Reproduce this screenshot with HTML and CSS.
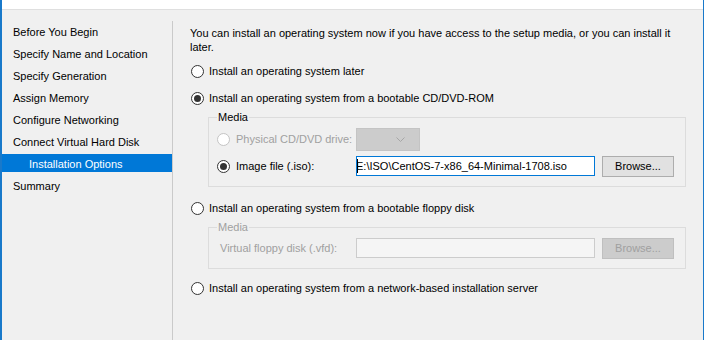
FILE: index.html
```html
<!DOCTYPE html>
<html lang="en">
<head>
    <meta charset="UTF-8">
    <title>Installation Options</title>
    <link rel="stylesheet" href="styles.css">
</head>
<body>

    <div class="wizard">
        <!-- Header strip -->
        <div class="wizard-header"></div>

        <div class="wizard-body">
            <!-- Step list -->
            <ul class="steps">
                <li class="step">Before You Begin</li>
                <li class="step">Specify Name and Location</li>
                <li class="step">Specify Generation</li>
                <li class="step">Assign Memory</li>
                <li class="step">Configure Networking</li>
                <li class="step">Connect Virtual Hard Disk</li>
                <li class="step step-sub step-active">Installation Options</li>
                <li class="step">Summary</li>
            </ul>

            <div class="divider"></div>

            <!-- Page content -->
            <div class="page">
                <p class="intro">You can install an operating system now if you have access to the setup media, or you can install it<br>later.</p>

                <label class="option option-first">
                    <span class="radio"></span>
                    <span>Install an operating system later</span>
                </label>

                <label class="option option-second">
                    <span class="radio radio-checked"></span>
                    <span>Install an operating system from a bootable CD/DVD-ROM</span>
                </label>

                <fieldset class="media">
                    <legend>Media</legend>
                    <div class="media-row">
                        <span class="media-label disabled">
                            <span class="radio radio-disabled"></span>
                            <span>Physical CD/DVD drive:</span>
                        </span>
                        <span class="combo">
                            <svg width="9" height="5" viewBox="0 0 9 5"><path d="M0.5 0.5 L4.5 4.5 L8.5 0.5" fill="none" stroke="#a6a6a6" stroke-width="1"/></svg>
                        </span>
                    </div>
                    <div class="media-row">
                        <span class="media-label">
                            <span class="radio radio-checked"></span>
                            <span>Image file (.iso):</span>
                        </span>
                        <span class="textbox textbox-focus"><span class="caret"></span><span class="textbox-value">E:\ISO\CentOS-7-x86_64-Minimal-1708.iso</span></span>
                        <span class="btn">Browse...</span>
                    </div>
                </fieldset>

                <label class="option option-floppy">
                    <span class="radio"></span>
                    <span>Install an operating system from a bootable floppy disk</span>
                </label>

                <fieldset class="media media-disabled">
                    <legend>Media</legend>
                    <div class="media-row">
                        <span class="media-label media-label-plain disabled">Virtual floppy disk (.vfd):</span>
                        <span class="textbox textbox-disabled"></span>
                        <span class="btn btn-disabled">Browse...</span>
                    </div>
                </fieldset>

                <label class="option option-network">
                    <span class="radio"></span>
                    <span>Install an operating system from a network-based installation server</span>
                </label>
            </div>
        </div>
    </div>

</body>
</html>
```

FILE: styles.css
```css
/* Reset */
*, *::before, *::after {
    box-sizing: border-box;
    margin: 0;
    padding: 0;
}

body {
    font-family: 'Liberation Sans', Arial, sans-serif;
    font-size: 11px;
    color: #000;
    background: #f0f0f0;
}

/* Window frame */
.wizard {
    width: 704px;
    height: 340px;
    background: #f0f0f0;
    border-left: 2px solid #1979ca;
    border-right: 1px solid #1979ca;
    display: flex;
    flex-direction: column;
    overflow: hidden;
}

.wizard-header {
    height: 10px;
    background: #fff;
    border-bottom: 1px solid #dfdfdf;
    flex: none;
}

.wizard-body {
    flex: 1;
    display: flex;
}

/* Step list */
.steps {
    list-style: none;
    width: 170px;
    padding-top: 12px;
    flex: none;
}

.step {
    height: 18px;
    line-height: 20px;
    margin-bottom: 4px;
    padding-left: 11px;
    white-space: nowrap;
}

.step-sub {
    padding-left: 27px;
}

.step-active {
    background: #0078d7;
    color: #fff;
}

.divider {
    width: 1px;
    margin-top: 11px;
    background: #cacaca;
    flex: none;
}

/* Page */
.page {
    flex: 1;
    padding: 16px 17px 0 17px;
}

.intro {
    line-height: 14px;
    white-space: nowrap;
}

.option {
    display: flex;
    align-items: center;
    gap: 5px;
    height: 18px;
    padding-left: 1px;
    white-space: nowrap;
}

.option-first { margin-top: 8px; }
.option-second { margin-top: 9px; }
.option-floppy { margin-top: 12px; }
.option-network { margin-top: 10px; }

/* Radio buttons */
.radio {
    width: 13px;
    height: 13px;
    border: 1px solid #333;
    border-radius: 50%;
    background: #fff;
    flex: none;
    display: flex;
    align-items: center;
    justify-content: center;
}

.radio-checked::after {
    content: '';
    width: 7px;
    height: 7px;
    border-radius: 50%;
    background: #333;
}

.radio-disabled {
    border-color: #c4c4c4;
}

/* Media group boxes */
.media {
    border: 1px solid #dcdcdc;
    margin: 3px 0 0 18px;
    padding: 3px 8px 8px 8px;
}

.media legend {
    padding: 0 1px;
    line-height: 14px;
}

.media-disabled {
    padding-top: 2px;
    padding-bottom: 8px;
}

.media-disabled legend {
    color: #a0a0a0;
}

.media-row {
    display: flex;
    align-items: center;
    height: 24px;
}

.media-row + .media-row {
    margin-top: 3px;
}

.media-label {
    width: 139px;
    display: flex;
    align-items: center;
    gap: 6px;
    white-space: nowrap;
    flex: none;
}

.media-label-plain {
    padding-left: 3px;
}

.disabled {
    color: #a0a0a0;
}

/* Inputs */
.combo {
    width: 64px;
    height: 23px;
    background: #cccccc;
    border: 1px solid #c4c4c4;
    display: flex;
    align-items: center;
    justify-content: flex-end;
    padding-right: 14px;
}

.combo svg {
    display: block;
}

.textbox {
    width: 239px;
    height: 20px;
    background: #fff;
    border: 1px solid #7a7a7a;
    display: flex;
    align-items: center;
    overflow: hidden;
    white-space: nowrap;
    flex: none;
}

.textbox-focus {
    border-color: #0078d7;
}

.textbox-disabled {
    background: #f5f5f5;
    border-color: #cccccc;
}

.caret {
    width: 1px;
    height: 14px;
    background: #000;
    flex: none;
}

.textbox-value {
    margin-left: -2px;
}

.btn {
    width: 72px;
    height: 21px;
    margin-left: 7px;
    background: #e1e1e1;
    border: 1px solid #adadad;
    display: flex;
    align-items: center;
    justify-content: center;
    white-space: nowrap;
    flex: none;
}

.btn-disabled {
    background: #cccccc;
    border-color: #bfbfbf;
    color: #a0a0a0;
}
```
